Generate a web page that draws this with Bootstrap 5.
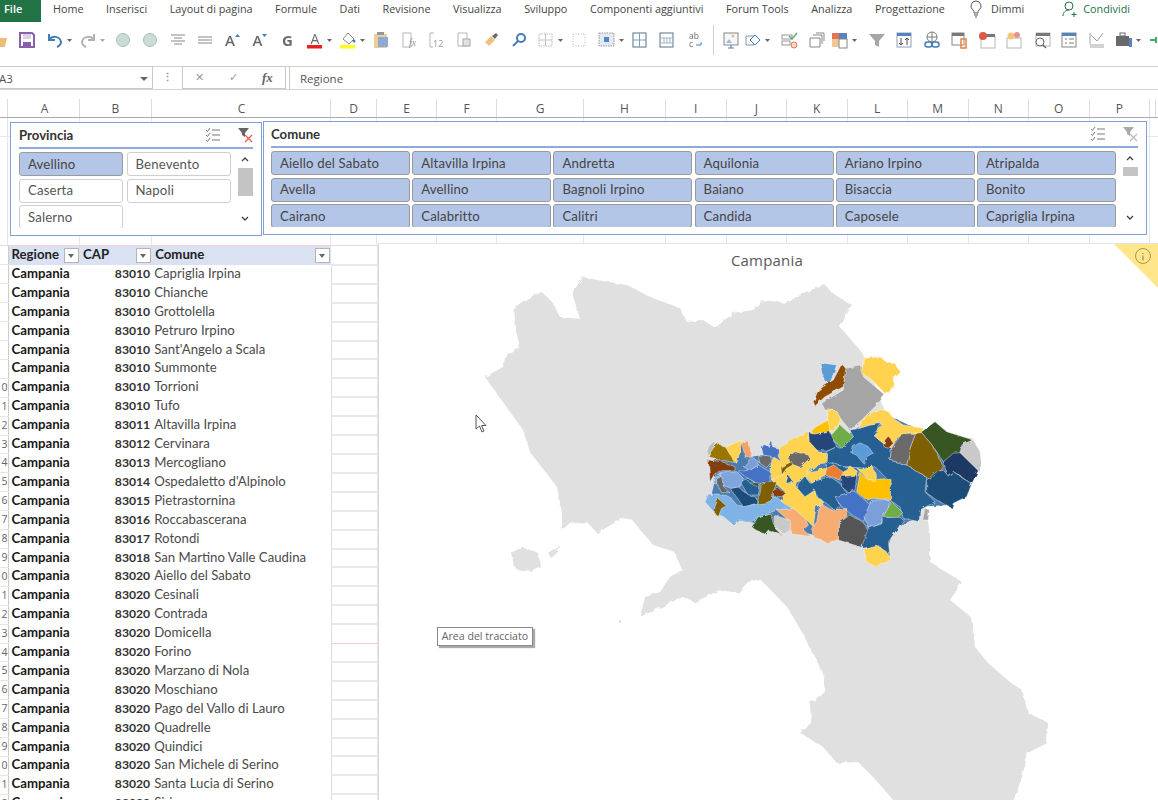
<!DOCTYPE html>
<html lang="it"><head><meta charset="utf-8"><title>Campania</title>
<link href="https://cdn.jsdelivr.net/npm/bootstrap@5.3.0/dist/css/bootstrap.min.css" rel="stylesheet">
<style>
html,body{margin:0;height:800px;overflow:hidden;background:#fff}
body{width:1158px;font-family:"Open Sans","Liberation Sans",sans-serif;font-size:11px;color:#444}
.tabs{height:22px}
.tab-file{width:41px;height:22px;background:#217346;color:#fff;font-weight:600;padding-left:4px;line-height:18px;font-size:11px;border-radius:0}
.tabs a{color:#444;text-decoration:none;line-height:18px;font-size:10.8px}
.tabs .a1{margin-left:12px}.tabs .a2{margin-left:22.600px}
.tabs .tgreen{color:#217346}
.toolbar{height:44px;padding-bottom:8px;margin-left:-19px}
.ti{width:18px;height:18px;margin-left:9.5px;flex:none;font-size:15px;line-height:18px;text-align:center;color:#555;opacity:.88}
.tc{width:5px;height:18px;margin-left:3px;flex:none}
.tc+.ti{margin-left:7px}
.g1{margin-left:9px!important}.g3{margin-left:9.5px!important}.g4{margin-left:10px!important}.g5{margin-left:5.500px!important}.g6{margin-left:10.500px!important}.g7{margin-left:8.500px!important}.g8{margin-left:4px!important}
.sep{width:1px;height:30px;background:#ccc;flex:none;margin-left:9px}
.fbar{height:24px;border-top:1px solid #c9d6c9;border-bottom:1px solid #d4d4d4}
.namebox{width:154px;height:23px;border:1px solid #c9c9c9;border-left:0;padding:3px 0 0 0;font-size:11.5px;color:#555;margin-top:-1px;margin-left:-1px}
.fdots{width:29px;color:#999;text-align:center;font-weight:700;line-height:20px}
.fbtns{width:104px;height:23px;border:1px solid #c9c9c9;margin-top:-1px;color:#999}
.fxs{font-family:"Liberation Serif",serif;font-style:italic;font-weight:700;font-size:13px;color:#666}
.finput{flex:1;height:23px;border-left:1px solid #c9c9c9;margin-left:3px;margin-top:-1px;padding:4px 0 0 10px;font-size:11.5px;color:#555}
.colhead{height:19px;margin-top:9px;border-bottom:1px solid #aaa;color:#555;font-size:12px}
.c{flex:none;border-right:1px solid #dcdcdc;text-align:center;line-height:19px;height:18px}
.c0{width:8px}.cA{width:72px;padding-left:2px}.cB{width:72px}.cC{width:179px;padding-left:1px}.cD{width:46px}.cE{width:60px}.cF{width:60px}.cG{width:87px}.cH{width:82px}.cN{width:60.500px}.cZ{width:6px}
.sheet{height:682px}
.band .c{height:100%;border-right:1px solid #e6e6e6}
.b1{height:19px;border-bottom:1px solid #e6e6e6}
.b2{height:109px;border-bottom:1px solid #f3d5d5}
table.grid{table-layout:fixed;width:378px;margin:0;font-family:Lato,"Liberation Sans",sans-serif;font-size:13.2px;border-collapse:collapse;color:#4a4a4a}
table.grid td,table.grid th{height:18.92px;padding:0;line-height:17px;border:0;white-space:nowrap;overflow:hidden;background:#fff;box-shadow:none}
table.grid .rn{width:8px;text-align:right;font-family:"Open Sans",sans-serif;font-size:10.5px;font-weight:400;color:#666;border-bottom:1px solid #e6e6e6;border-right:1px solid #ccc;direction:rtl}
table.grid .rg{font-weight:700;color:#1a1a1a;padding-left:3px}
table.grid .cp{font-weight:700;color:#333;text-align:right;padding-right:2px;font-size:12.2px}
table.grid .cm{padding-left:2px;border-right:1px solid #dcdcdc}
table.grid .gd{width:47px;border-bottom:2px solid #e8e8e8;border-right:1px solid #e4e4e4}
table.grid .pink{border-bottom:1px solid #f3cfcf}
table.grid tr.hd th{background:#d9e1f2;font-weight:700;color:#222;padding-left:3px;position:relative}
table.grid tr.hd th.gd,table.grid tr.hd th.rn{background:#fff;padding:0}
.fb{position:absolute;right:1px;top:2px;width:15px;height:15px;background:#fff;border:1px solid #b5b5b5}
.fb::after{content:"";position:absolute;left:3px;top:5px;border:3.5px solid transparent;border-top:4px solid #666}
.slicer{position:absolute;background:#fff;border:1px solid #7f9fd6;padding:4px 8px 0}
.s1{left:10px;top:122px;width:252px;height:114px}
.s2{left:263px;top:121px;width:884px;height:114px;padding-left:7px}
.sl-head{height:22px;border-bottom:2px solid #8eaadb;font-family:Lato,"Liberation Sans",sans-serif;font-weight:700;font-size:13.2px;color:#333;line-height:17px}
.sl-body{margin-top:3px;column-gap:3.5px;row-gap:2.500px}
.s1 .sl-body{grid-template-columns:repeat(2,104px);width:212px;height:76px;overflow:hidden}
.s2 .sl-body{grid-template-columns:repeat(6,139px);column-gap:2.200px;width:846px;height:76px;overflow:hidden}
.sb{--bs-btn-padding-y:0;--bs-btn-padding-x:8px;--bs-btn-font-size:13.2px;--bs-btn-border-radius:3px;--bs-btn-color:#555;--bs-btn-bg:#fff;--bs-btn-border-color:#cfcfcf;--bs-btn-line-height:21px;height:24px;text-align:left;font-family:Lato,"Open Sans",sans-serif;letter-spacing:.15px;white-space:nowrap}
.sb.on{--bs-btn-bg:#b4c6e7;--bs-btn-border-color:#9a9a9a;--bs-btn-color:#444}
.sbar{width:16px;height:74px;margin-top:3px}
.thumb{background:#c4c4c4;width:15px;margin-top:2px}
.s1 .thumb{height:28px}.s2 .thumb{height:9px}
.chart{position:absolute;left:378px;top:243px;width:780px;height:557px;background:#fff;border-left:1px solid #d9d9d9;border-top:1px solid #e4e4e4}
.chart-title{font-size:15px;color:#595959;padding:5px 3px 0 0;text-align:center;line-height:22px;letter-spacing:.2px}
.mapsvg{position:absolute;left:0;top:0}
.corner{position:absolute;right:0;top:0}
.tip{position:absolute;left:58px;top:383px;width:96px;height:19px;background:#fff;border:1px solid #8a8a8a;box-shadow:2px 2px 1px #aaa;font-size:10.6px;line-height:16px;text-align:center;color:#666}
.cursor{position:absolute;left:96px;top:170px}
</style></head><body>

<nav class="tabs d-flex align-items-start">
<div class="tab-file">File</div>
<a class="a1" href="#">Home</a><a class="a2" href="#">Inserisci</a><a class="a2" href="#">Layout di pagina</a><a class="a2" href="#">Formule</a><a class="a2" href="#">Dati</a><a class="a2" href="#">Revisione</a><a class="a2" href="#">Visualizza</a><a class="a2" href="#">Sviluppo</a><a class="a2" href="#">Componenti aggiuntivi</a><a class="a2" href="#">Forum Tools</a><a class="a2" href="#">Analizza</a><a class="a2" href="#">Progettazione</a>
<svg class="ms-4 me-2" width="14" height="18" viewBox="0 0 14 18"><path d="M7 1a5 5 0 0 0-3 9c1 1 1 2 1 3h4c0-1 0-2 1-3a5 5 0 0 0-3-9zM5 15h4M6 17h2" fill="none" stroke="#555"/></svg>
<a href="#">Dimmi</a>
<svg class="ms-auto" width="17" height="18" viewBox="0 0 17 18"><circle cx="7" cy="6" r="4" fill="none" stroke="#217346"/><path d="M1 16c0-4 3-6 6-6M12 12v5M9.500 14.500h5" fill="none" stroke="#217346"/></svg>
<a href="#" class="tgreen ms-1 me-4 pe-1">Condividi</a>
</nav>

<div class="toolbar d-flex align-items-center">
<svg class="ti" viewBox="0 0 18 18"><path d="M1 5h6l2 2h7l-2 9H1z" fill="#eab564"/></svg>
<svg class="ti" viewBox="0 0 18 18"><path d="M2 2h12l2 2v12H2z" fill="none" stroke="#7a4ba0" stroke-width="2"/><path d="M5 3h8v5H5z" fill="#d9cbe6"/><path d="M5 11h8v5H5z" fill="#7a4ba0"/></svg>
<svg class="ti" viewBox="0 0 18 18"><path d="M3 3v6h6M3 9c3-5 11-4 12 2 0 3-2 4-4 5" fill="none" stroke="#2a6ab0" stroke-width="2"/></svg><svg class="tc" viewBox="0 0 5 18"><path d="M0 8h5L2.500 11z" fill="#666"/></svg>
<svg class="ti" viewBox="0 0 18 18"><path d="M15 3v6H9M15 9C12 4 4 5 3 11c0 3 2 4 4 5" fill="none" stroke="#a8a8a8" stroke-width="2"/></svg><svg class="tc" viewBox="0 0 5 18"><path d="M0 8h5L2.500 11z" fill="#aaa"/></svg>
<svg class="ti g1" viewBox="0 0 18 18"><circle cx="9" cy="9" r="6.500" fill="#c3d8d0" stroke="#97b7ab"/></svg>
<svg class="ti" viewBox="0 0 18 18"><circle cx="9" cy="9" r="6.500" fill="#c3d8d0" stroke="#97b7ab"/></svg>
<svg class="ti" viewBox="0 0 18 18"><path d="M2 4h14M5 7h8M2 10h14M5 13h8" stroke="#777"/></svg>
<svg class="ti" viewBox="0 0 18 18"><path d="M2 6h14M2 9h14M2 12h14" stroke="#777"/></svg>
<span class="ti d-flex justify-content-center fw-semibold">A<svg width="5" height="18" viewBox="0 0 5 18"><path d="M0 6l2.500-3L5 6z" fill="#2a6ab0"/></svg></span>
<span class="ti d-flex justify-content-center fw-semibold">A<svg width="5" height="18" viewBox="0 0 5 18"><path d="M0 3l2.500 3L5 3z" fill="#2a6ab0"/></svg></span>
<span class="ti fw-bold">G</span>
<svg class="ti" viewBox="0 0 18 18"><text x="9" y="13" text-anchor="middle" font-size="14" fill="#555" font-family="Open Sans">A</text><rect x="1" y="14" width="15" height="3.500" fill="#e60000"/></svg><svg class="tc" viewBox="0 0 5 18"><path d="M0 8h5L2.500 11z" fill="#666"/></svg>
<svg class="ti" viewBox="0 0 18 18"><path d="M9 2l6 6-5 5-6-5z" fill="#fff" stroke="#777"/><circle cx="15" cy="10" r="1.500" fill="#2a6ab0"/><rect x="1" y="14" width="15" height="3.500" fill="#ffff00"/></svg><svg class="tc" viewBox="0 0 5 18"><path d="M0 8h5L2.500 11z" fill="#666"/></svg>
<svg class="ti" viewBox="0 0 18 18"><rect x="2" y="3" width="13" height="14" fill="#edc58d"/><rect x="5" y="1" width="7" height="3" fill="#888"/><rect x="6" y="6" width="10" height="10" fill="#7d9fce"/></svg>
<svg class="ti" viewBox="0 0 18 18"><path d="M3 2h8v14H3z" fill="none" stroke="#aaa"/><text x="9" y="15" font-size="10" font-style="italic" fill="#888" font-family="Liberation Serif">fx</text></svg>
<svg class="ti" viewBox="0 0 18 18"><path d="M3 2h4M3 2v14h3" fill="none" stroke="#aaa"/><text x="6" y="16" font-size="9" fill="#888" font-family="Open Sans">12</text></svg>
<svg class="ti" viewBox="0 0 18 18"><path d="M3 2h9v13H3z" fill="none" stroke="#aaa"/><rect x="8" y="8" width="7" height="7" fill="#ddd" stroke="#999"/></svg>
<svg class="ti" viewBox="0 0 18 18"><path d="M3 11l6-6 4 4-6 6z" fill="#e9bb6e"/><path d="M10 5l4-3 2 2-3 4z" fill="#555"/></svg>
<svg class="ti" viewBox="0 0 18 18"><circle cx="11" cy="7" r="4" fill="none" stroke="#2a6ab0" stroke-width="2"/><path d="M8 10l-5 5" stroke="#2a6ab0" stroke-width="2"/></svg>
<svg class="ti" viewBox="0 0 18 18"><rect x="2" y="3" width="13" height="12" fill="none" stroke="#aaa" stroke-dasharray="1.500 1"/><path d="M8.500 3v12M2 9h13" stroke="#bbb"/></svg><svg class="tc" viewBox="0 0 5 18"><path d="M0 8h5L2.500 11z" fill="#666"/></svg>
<svg class="ti" viewBox="0 0 18 18"><rect x="3" y="3" width="12" height="12" fill="none" stroke="#aaa" stroke-dasharray="1 1.500"/></svg>
<svg class="ti g3" viewBox="0 0 18 18"><rect x="1" y="2" width="15" height="13" fill="#dfe6ee" stroke="#888" stroke-dasharray="1.500 1"/><rect x="6" y="6" width="5" height="5" fill="#3d72b8"/></svg><svg class="tc" viewBox="0 0 5 18"><path d="M0 8h5L2.500 11z" fill="#666"/></svg>
<svg class="ti" viewBox="0 0 18 18"><rect x="2" y="2" width="13" height="14" fill="none" stroke="#3f5f7f"/><path d="M2 9h13M8.500 2v14" stroke="#6f8fa8"/></svg>
<svg class="ti" viewBox="0 0 18 18"><rect x="2" y="2" width="13" height="14" fill="none" stroke="#3f5f7f"/><path d="M2 7h13M6 7v5M9 7v5M12 7v5M2 12h13" stroke="#8fa8bb"/></svg>
<svg class="ti" viewBox="0 0 18 18"><text x="3" y="8" font-size="8.500" fill="#555" font-family="Open Sans">ab</text><text x="3" y="16" font-size="8.500" fill="#555" font-family="Open Sans">c</text><path d="M10 14h5v-3" fill="none" stroke="#2a6ab0"/></svg>
<span class="sep"></span>
<svg class="ti g7" viewBox="0 0 18 18"><rect x="2" y="2" width="14" height="12" fill="#f4f7fb" stroke="#777"/><path d="M4 12l3-4 3 4z" fill="#8db4e2"/><circle cx="11" cy="5" r="1.500" fill="#e8b464"/><path d="M9 14v3M6 17h6" stroke="#2a6ab0"/></svg>
<svg class="ti g8" viewBox="0 0 18 18"><path d="M2 5h8v9H2z" fill="none" stroke="#6a86a8"/><path d="M11 4l5 5-5 5-5-5z" fill="#fff" stroke="#2a6ab0"/></svg><svg class="tc" viewBox="0 0 5 18"><path d="M0 8h5L2.500 11z" fill="#666"/></svg>
<svg class="ti g4" viewBox="0 0 18 18"><rect x="2" y="4" width="10" height="4" fill="none" stroke="#888"/><rect x="2" y="10" width="8" height="4" fill="none" stroke="#888"/><path d="M9 5l3 3 5-6" fill="none" stroke="#4a9a5a" stroke-width="1.500"/><circle cx="14" cy="14" r="3" fill="#f5d5c5" stroke="#e0603a"/></svg>
<svg class="ti" viewBox="0 0 18 18"><path d="M2 7h10v9H2z" fill="#fff" stroke="#777"/><path d="M5 4h9v9M8 2h8v8" fill="none" stroke="#777"/></svg>
<svg class="ti g5" viewBox="0 0 18 18"><rect x="1" y="2" width="7" height="6" fill="#e0603a"/><rect x="8" y="2" width="8" height="6" fill="#3d72b8"/><rect x="1" y="8" width="7" height="8" fill="#f0c08a"/><rect x="8" y="8" width="8" height="9" fill="#fff" stroke="#777"/></svg><svg class="tc" viewBox="0 0 5 18"><path d="M0 8h5L2.500 11z" fill="#666"/></svg>
<svg class="ti g6" viewBox="0 0 18 18"><path d="M1 3h16l-6 7v6l-4-2v-4z" fill="#9a9a9a"/></svg>
<svg class="ti" viewBox="0 0 18 18"><rect x="2" y="2" width="14" height="14" fill="none" stroke="#7a93b0"/><rect x="2" y="2" width="14" height="3" fill="#3d72b8"/><path d="M6 7v7M4 12l2 2 2-2M12 14V7M10 9l2-2 2 2" fill="none" stroke="#333"/></svg>
<svg class="ti" viewBox="0 0 18 18"><circle cx="9" cy="6" r="5" fill="none" stroke="#666"/><path d="M4 6h10M9 1v10" stroke="#666"/><rect x="2" y="11" width="7" height="5" rx="2.500" fill="none" stroke="#2a6ab0" stroke-width="1.500"/><rect x="9" y="11" width="7" height="5" rx="2.500" fill="none" stroke="#2a6ab0" stroke-width="1.500"/></svg>
<svg class="ti" viewBox="0 0 18 18"><rect x="2" y="2" width="12" height="12" fill="#fff" stroke="#777"/><rect x="2" y="2" width="12" height="3" fill="#666"/><path d="M11 8h5v9h-5z" fill="none" stroke="#e8702a" stroke-width="1.500"/></svg>
<svg class="ti" viewBox="0 0 18 18"><rect x="3" y="5" width="14" height="12" fill="#fff" stroke="#aaa"/><rect x="8" y="3" width="9" height="3" fill="#666"/><circle cx="5" cy="5" r="4" fill="#d8442a"/></svg>
<svg class="ti" viewBox="0 0 18 18"><rect x="2" y="7" width="14" height="10" fill="#fff" stroke="#aaa"/><circle cx="6" cy="5" r="3.500" fill="#f0c060"/><circle cx="12" cy="4" r="3" fill="#e88080"/></svg>
<svg class="ti" viewBox="0 0 18 18"><rect x="3" y="2" width="14" height="13" fill="#fff" stroke="#aaa"/><rect x="3" y="2" width="14" height="3" fill="#666"/><circle cx="7" cy="11" r="4" fill="#fff" stroke="#555"/><path d="M10 14l3 3" stroke="#555" stroke-width="1.500"/></svg>
<svg class="ti" viewBox="0 0 18 18"><rect x="2" y="2" width="14" height="14" fill="#fff" stroke="#777"/><rect x="2" y="2" width="14" height="3" fill="#3d72b8"/><path d="M5 8h2M9 8h5M5 12h2M9 12h5" stroke="#666"/></svg>
<svg class="ti" viewBox="0 0 18 18"><rect x="2" y="13" width="14" height="4" fill="#ccc"/><path d="M2 2v11M3 4l6 6 6-8" fill="none" stroke="#999"/></svg>
<svg class="ti" viewBox="0 0 18 18"><rect x="1" y="5" width="13" height="10" fill="#555"/><rect x="5" y="2" width="5" height="3" fill="none" stroke="#555"/><rect x="14" y="7" width="3" height="9" fill="#3d72b8"/></svg><svg class="tc" viewBox="0 0 5 18"><path d="M0 8h5L2.500 11z" fill="#666"/></svg>
<svg class="ti" viewBox="0 0 18 18"><path d="M2 9h6M8 6v6" stroke="#2f9e5a" stroke-width="2"/></svg>
</div>

<div class="fbar d-flex align-items-start">
<div class="namebox d-flex justify-content-between"><span>A3</span><svg class="me-1 mt-1" width="8" height="10" viewBox="0 0 8 10"><path d="M0 3h8L4 7z" fill="#666"/></svg></div>
<div class="fdots">⋮</div>
<div class="fbtns d-flex align-items-center justify-content-around"><span>✕</span><span>✓</span><span class="fxs">fx</span></div>
<div class="finput">Regione</div>
</div>

<div class="colhead d-flex">
<div class="c c0"></div><div class="c cA">A</div><div class="c cB">B</div><div class="c cC">C</div><div class="c cD">D</div><div class="c cE">E</div><div class="c cF">F</div><div class="c cG">G</div><div class="c cH">H</div><div class="c cN">I</div><div class="c cN">J</div><div class="c cN">K</div><div class="c cN">L</div><div class="c cN">M</div><div class="c cN">N</div><div class="c cN">O</div><div class="c cN">P</div><div class="c cZ"></div>
</div>

<div class="sheet position-relative overflow-hidden">
<div class="band">
<div class="b1 d-flex"><div class="c c0"></div><div class="c cA"></div><div class="c cB"></div><div class="c cC"></div><div class="c cD"></div><div class="c cE"></div><div class="c cF"></div><div class="c cG"></div><div class="c cH"></div><div class="c cN"></div><div class="c cN"></div><div class="c cN"></div><div class="c cN"></div><div class="c cN"></div><div class="c cN"></div><div class="c cN"></div><div class="c cN"></div></div>
<div class="b2 d-flex"><div class="c c0"></div><div class="c cA"></div><div class="c cB"></div><div class="c cC"></div><div class="c cD"></div><div class="c cE"></div><div class="c cF"></div><div class="c cG"></div><div class="c cH"></div><div class="c cN"></div><div class="c cN"></div><div class="c cN"></div><div class="c cN"></div><div class="c cN"></div><div class="c cN"></div><div class="c cN"></div><div class="c cN"></div></div>
</div>
<table class="table grid">
<colgroup><col class="c0"><col class="cA"><col class="cB"><col class="cC"><col class="cD"></colgroup>
<tbody>
<tr class="hd"><th class="rn"></th><th>Regione<span class="fb"></span></th><th>CAP<span class="fb"></span></th><th>Comune<span class="fb"></span></th><th class="gd"></th></tr>
<tr><td class="rn"></td><td class="rg">Campania</td><td class="cp">83010</td><td class="cm">Capriglia Irpina</td><td class="gd"></td></tr>
<tr><td class="rn"></td><td class="rg">Campania</td><td class="cp">83010</td><td class="cm">Chianche</td><td class="gd"></td></tr>
<tr><td class="rn"></td><td class="rg">Campania</td><td class="cp">83010</td><td class="cm">Grottolella</td><td class="gd"></td></tr>
<tr><td class="rn"></td><td class="rg">Campania</td><td class="cp">83010</td><td class="cm">Petruro Irpino</td><td class="gd"></td></tr>
<tr><td class="rn"></td><td class="rg">Campania</td><td class="cp">83010</td><td class="cm">Sant'Angelo a Scala</td><td class="gd"></td></tr>
<tr><td class="rn"></td><td class="rg">Campania</td><td class="cp">83010</td><td class="cm">Summonte</td><td class="gd"></td></tr>
<tr><td class="rn">0</td><td class="rg">Campania</td><td class="cp">83010</td><td class="cm">Torrioni</td><td class="gd"></td></tr>
<tr><td class="rn">1</td><td class="rg">Campania</td><td class="cp">83010</td><td class="cm">Tufo</td><td class="gd"></td></tr>
<tr><td class="rn">2</td><td class="rg">Campania</td><td class="cp">83011</td><td class="cm">Altavilla Irpina</td><td class="gd"></td></tr>
<tr><td class="rn">3</td><td class="rg">Campania</td><td class="cp">83012</td><td class="cm">Cervinara</td><td class="gd"></td></tr>
<tr><td class="rn">4</td><td class="rg">Campania</td><td class="cp">83013</td><td class="cm">Mercogliano</td><td class="gd"></td></tr>
<tr><td class="rn">5</td><td class="rg">Campania</td><td class="cp">83014</td><td class="cm">Ospedaletto d'Alpinolo</td><td class="gd"></td></tr>
<tr><td class="rn">6</td><td class="rg">Campania</td><td class="cp">83015</td><td class="cm">Pietrastornina</td><td class="gd"></td></tr>
<tr><td class="rn">7</td><td class="rg">Campania</td><td class="cp">83016</td><td class="cm">Roccabascerana</td><td class="gd"></td></tr>
<tr><td class="rn">8</td><td class="rg">Campania</td><td class="cp">83017</td><td class="cm">Rotondi</td><td class="gd"></td></tr>
<tr><td class="rn">9</td><td class="rg">Campania</td><td class="cp">83018</td><td class="cm">San Martino Valle Caudina</td><td class="gd"></td></tr>
<tr><td class="rn">0</td><td class="rg">Campania</td><td class="cp">83020</td><td class="cm">Aiello del Sabato</td><td class="gd"></td></tr>
<tr><td class="rn">1</td><td class="rg">Campania</td><td class="cp">83020</td><td class="cm">Cesinali</td><td class="gd"></td></tr>
<tr><td class="rn">2</td><td class="rg">Campania</td><td class="cp">83020</td><td class="cm">Contrada</td><td class="gd"></td></tr>
<tr><td class="rn">3</td><td class="rg">Campania</td><td class="cp">83020</td><td class="cm">Domicella</td><td class="gd pink"></td></tr>
<tr><td class="rn">4</td><td class="rg">Campania</td><td class="cp">83020</td><td class="cm">Forino</td><td class="gd"></td></tr>
<tr><td class="rn">5</td><td class="rg">Campania</td><td class="cp">83020</td><td class="cm">Marzano di Nola</td><td class="gd"></td></tr>
<tr><td class="rn">6</td><td class="rg">Campania</td><td class="cp">83020</td><td class="cm">Moschiano</td><td class="gd"></td></tr>
<tr><td class="rn">7</td><td class="rg">Campania</td><td class="cp">83020</td><td class="cm">Pago del Vallo di Lauro</td><td class="gd"></td></tr>
<tr><td class="rn">8</td><td class="rg">Campania</td><td class="cp">83020</td><td class="cm">Quadrelle</td><td class="gd"></td></tr>
<tr><td class="rn">9</td><td class="rg">Campania</td><td class="cp">83020</td><td class="cm">Quindici</td><td class="gd"></td></tr>
<tr><td class="rn">0</td><td class="rg">Campania</td><td class="cp">83020</td><td class="cm">San Michele di Serino</td><td class="gd"></td></tr>
<tr><td class="rn">1</td><td class="rg">Campania</td><td class="cp">83020</td><td class="cm">Santa Lucia di Serino</td><td class="gd"></td></tr>
<tr><td class="rn">2</td><td class="rg">Campania</td><td class="cp">83020</td><td class="cm">Sirignano</td><td class="gd"></td></tr>
</tbody></table>
</div>

<section class="slicer s1">
<div class="sl-head d-flex justify-content-between"><span>Provincia</span><span class="d-flex gap-3 me-0">
<svg width="16" height="16" viewBox="0 0 16 16"><path d="M1 3l1.500 1.500L5 1M1 8l1.500 1.500L5 6M1 13l1.500 1.500L5 11" fill="none" stroke="#777"/><path d="M7 3h8M7 8h8M7 13h8" stroke="#777"/></svg>
<svg width="16" height="16" viewBox="0 0 16 16"><path d="M1 1h11L8 6v4L5 8V6z" fill="#666"/><path d="M8 8l7 7M15 8l-7 7" stroke="#e4604e" stroke-width="1.300"/></svg></span></div>
<div class="d-flex justify-content-between">
<div class="d-grid sl-body">
<button class="btn sb on">Avellino</button><button class="btn sb">Benevento</button>
<button class="btn sb">Caserta</button><button class="btn sb">Napoli</button>
<button class="btn sb">Salerno</button>
</div>
<div class="sbar d-flex flex-column align-items-center justify-content-between"><svg width="10" height="14" viewBox="0 0 10 14"><path d="M2 9l3-3 3 3" fill="none" stroke="#444" stroke-width="1.400"/></svg><div class="thumb"></div><div class="flex-grow-1"></div><svg width="10" height="14" viewBox="0 0 10 14"><path d="M2 5l3 3 3-3" fill="none" stroke="#444" stroke-width="1.400"/></svg></div>
</div>
</section>

<section class="slicer s2">
<div class="sl-head d-flex justify-content-between"><span>Comune</span><span class="d-flex gap-3">
<svg width="16" height="16" viewBox="0 0 16 16"><path d="M1 3l1.500 1.500L5 1M1 8l1.500 1.500L5 6M1 13l1.500 1.500L5 11" fill="none" stroke="#777"/><path d="M7 3h8M7 8h8M7 13h8" stroke="#777"/></svg>
<svg width="16" height="16" viewBox="0 0 16 16"><path d="M1 1h11L8 6v4L5 8V6z" fill="#aaa"/><path d="M8 8l7 7M15 8l-7 7" stroke="#bbb" stroke-width="1.300"/></svg></span></div>
<div class="d-flex justify-content-between">
<div class="d-grid sl-body">
<button class="btn sb on">Aiello del Sabato</button><button class="btn sb on">Altavilla Irpina</button><button class="btn sb on">Andretta</button><button class="btn sb on">Aquilonia</button><button class="btn sb on">Ariano Irpino</button><button class="btn sb on">Atripalda</button>
<button class="btn sb on">Avella</button><button class="btn sb on">Avellino</button><button class="btn sb on">Bagnoli Irpino</button><button class="btn sb on">Baiano</button><button class="btn sb on">Bisaccia</button><button class="btn sb on">Bonito</button>
<button class="btn sb on">Cairano</button><button class="btn sb on">Calabritto</button><button class="btn sb on">Calitri</button><button class="btn sb on">Candida</button><button class="btn sb on">Caposele</button><button class="btn sb on">Capriglia Irpina</button>
</div>
<div class="sbar d-flex flex-column align-items-center justify-content-between"><svg width="10" height="14" viewBox="0 0 10 14"><path d="M2 9l3-3 3 3" fill="none" stroke="#444" stroke-width="1.400"/></svg><div class="thumb"></div><div class="flex-grow-1"></div><svg width="10" height="14" viewBox="0 0 10 14"><path d="M2 5l3 3 3-3" fill="none" stroke="#444" stroke-width="1.400"/></svg></div>
</div>
</section>

<figure class="chart m-0">
<svg class="mapsvg" width="779" height="556" viewBox="379 244 779 556">
<defs><filter id="rough" x="-3%" y="-3%" width="106%" height="106%"><feTurbulence type="fractalNoise" baseFrequency=".16" numOctaves="2" seed="4" result="n"/><feDisplacementMap in="SourceGraphic" in2="n" scale="4"/></filter></defs>
<g filter="url(#rough)">
<g fill="#e0e0e0">
<path d="M485 377 503 367 505 358 520 347 515 327 513 308 528 298 542 292 552 302 560 317 580 319 572 293 583 277 597 280 627 285 650 297 680 308 687 322 703 320 715 328 733 313 753 310 762 300 787 303 803 293 825 285 832 293 852 305 840 327 860 350 865 358 880 400 925 505 930 533 930 562 962 582 950 600 972 618 975 647 988 663 1010 682 1022 690 1028 713 1048 723 1047 743 1028 753 1022 777 1010 810 973 810 902 810 873 777 858 762 837 763 823 747 800 733 811 723 810 703 825 692 823 673 802 632 787 607 760 579 748 582 738 593 720 590 695 602 683 597 640 617 645 597 660 592 670 577 682 570 675 552 653 545 632 520 623 518 597 533 587 522 570 523 562 530 562 513 557 487 530 452 523 430Z"/>
<path d="M511 553 522 547 538 553 541 566 530 571 515 569Z"/><path d="M548 553 559 545 558 552 551 558Z"/><path d="M619 620h3v3h-3Z"/>
</g>
<g transform="translate(680 340) scale(.33333)" stroke="#fff" stroke-width="1.200" stroke-linejoin="round">
<polygon fill="#4b7cb0" stroke="none" points="105,420 95,365 140,330 185,310 215,350 250,345 250,330 295,335 385,285 510,280 600,215 730,275 870,305 895,375 870,425 810,495 715,500 712,535 645,560 620,630 550,610 445,595 340,570 225,548 165,540 90,485"/>
<polygon fill="#255e91" points="510,270 540,265 570,255 605,250 580,285 610,310 635,325 630,360 680,375 740,412 735,455 765,485 720,510 718,545 670,535 660,500 630,480 630,425 585,380 550,385 490,380 430,365 440,335 470,320 480,325 520,290"/>
<polygon fill="#5b9bd5" points="420,68 470,75 450,130 430,120"/>
<polygon fill="#a5a5a5" points="495,85 545,78 550,110 615,165 590,195 545,240 510,270 485,240 465,212 435,210 425,190 490,150"/>
<polygon fill="#8f4b00" points="485,72 497,85 490,140 435,170 405,198 400,185 415,150 460,120"/>
<polygon fill="#ffd34f" points="545,100 550,55 600,50 625,70 645,70 660,95 640,110 640,145 615,160 570,115"/>
<polygon fill="#ffd34f" points="535,265 560,225 600,205 625,215 645,240 670,255 730,265 725,278 680,280 650,295 635,325 610,310 580,285 600,265 605,250 570,255"/>
<polygon fill="#385723" points="725,275 765,245 800,275 880,300 845,315 840,338 790,365 760,320 725,278"/>
<polygon fill="#c9c9c9" points="880,300 900,335 905,375 895,392 840,340 850,312"/>
<polygon fill="#7f6000" points="707,280 725,278 760,320 790,380 765,418 740,412 680,375 690,325"/>
<polygon fill="#6a6a6a" points="665,282 707,280 690,325 680,375 630,360 635,325"/>
<polygon fill="#1f3864" points="820,340 840,338 895,392 875,432 845,410 820,395 800,408 795,380 790,365"/>
<polygon fill="#1f4e79" points="740,420 770,395 790,390 805,408 820,395 875,432 860,470 820,490 815,505 770,480 740,460"/>
<polygon fill="#5b9bd5" points="540,308 565,320 578,340 560,350 550,370 530,345 515,340 520,320"/>
<polygon fill="#843c0c" points="625,288 640,310 625,325 610,318 615,300"/>
<polygon fill="#a5a5a5" points="735,505 748,510 745,540 728,540"/>
<polygon fill="#ffd34f" points="440,210 470,212 485,245 450,275 440,255"/>
<polygon fill="#ffc000" points="445,240 450,275 410,285 390,280 405,262"/>
<polygon fill="#70ad47" points="480,255 520,290 485,325 450,290"/>
<polygon fill="#264478" points="385,275 410,285 450,275 470,320 440,333 400,330 385,300"/>
<polygon fill="#ffd34f" points="295,325 385,272 388,305 420,340 440,340 438,372 410,375 385,395 382,420 350,425 345,440 320,430 310,405 275,420 270,385 280,350 295,350"/>
<polygon fill="#6a6a6a" points="325,350 345,335 385,345 390,355 360,382 330,370"/>
<polygon fill="#7f6000" points="305,405 303,380 335,365 338,375 320,385"/>
<polygon fill="#ffd34f" points="275,420 310,405 345,440 352,440 375,470 405,450 410,470 435,490 408,500 400,560 385,545 340,505 300,490 315,455"/>
<polygon fill="#255e91" points="355,430 375,408 390,430 430,415 450,410 480,430 500,460 470,470 478,495 465,512 440,490 410,470 405,450 375,470 352,445"/>
<polygon fill="#ffd34f" points="385,395 410,390 440,385 435,405 395,430 385,420"/>
<polygon fill="#255e91" points="440,365 490,380 550,385 530,400 485,400 440,385"/>
<polygon fill="#ed7d31" points="440,385 460,375 490,395 478,420 450,408 436,405"/>
<polygon fill="#ffd34f" points="485,395 510,378 535,395 530,410 490,410"/>
<polygon fill="#264478" points="485,410 530,405 525,450 505,457 485,440"/>
<polygon fill="#ffc000" points="540,400 565,420 630,415 632,480 580,475 560,480 530,455"/>
<polygon fill="#ffd34f" points="530,385 550,390 575,375 590,410 585,425 565,420"/>
<polygon fill="#4472c4" points="500,460 525,455 565,490 575,485 550,545 510,520 480,495 465,470"/>
<polygon fill="#7c9fd9" points="575,480 630,478 625,505 605,535 605,550 565,565 552,530"/>
<polygon fill="#70ad47" points="635,485 668,518 650,535 610,530"/>
<polygon fill="#255e91" points="610,533 660,532 670,540 650,570 625,605 630,650 600,620 550,628 543,595 565,565 605,552"/>
<polygon fill="#ffd34f" points="552,630 590,618 620,635 635,660 585,680 560,665"/>
<polygon fill="#545454" points="475,550 510,525 550,548 562,572 545,622 475,600"/>
<polygon fill="#f7ac72" points="420,490 455,510 500,505 500,530 475,550 475,600 440,608 400,590 395,565 410,545"/>
<polygon fill="#f7ac72" points="290,510 340,505 375,535 385,555 370,570 395,590 335,582 330,545"/>
<polygon fill="#c9c9c9" points="280,525 330,540 335,570 310,582 285,560"/>
<polygon fill="#385723" points="215,560 235,530 270,518 285,565 305,585 265,570 255,582 235,575"/>
<polygon fill="#7fb3e6" points="75,485 85,462 115,462 150,470 170,495 200,500 230,490 290,470 310,490 340,505 290,510 270,518 235,530 215,545 175,540 160,555 130,530 105,520"/>
<polygon fill="#7f6000" points="115,475 130,490 140,498 125,505 115,530 103,520 105,500"/>
<polygon fill="#1f4e79" points="150,445 175,440 190,455 230,475 230,490 190,500 165,465"/>
<polygon fill="#7f6000" points="245,430 290,425 280,460 275,485 230,492 240,460"/>
<polygon fill="#843c0c" points="280,450 295,445 318,460 305,470 280,468"/>
<polygon fill="#255e91" points="180,425 205,415 240,437 235,465 205,465"/>
<polygon fill="#4472c4" points="175,395 210,390 235,375 270,395 270,425 240,435 205,415"/>
<polygon fill="#7c9fd9" points="190,380 215,350 240,368 232,378 208,392"/>
<polygon fill="#6a6a6a" points="235,350 270,345 275,365 260,383 240,370"/>
<polygon fill="#4472c4" points="245,325 250,315 265,320 272,300 278,320 295,325 295,350 305,365 280,350 250,345"/>
<polygon fill="#f4a26b" points="185,310 200,298 210,320 215,350 197,355"/>
<polygon fill="#ffd34f" points="140,320 185,300 180,335 170,370 150,350"/>
<polygon fill="#9a7400" points="90,330 115,310 140,325 165,368 125,360 85,350"/>
<polygon fill="#bdbdbd" points="100,305 110,310 90,340 78,345 85,320"/>
<polygon fill="#843c0c" points="85,360 125,365 165,380 165,392 130,395 105,400 90,425"/>
<polygon fill="#7fa6dc" points="120,400 170,395 190,415 180,440 155,445 125,435"/>
<polygon fill="#7fb3e6" points="100,410 120,400 125,435 100,430"/>
<polygon fill="#666" points="110,410 125,410 130,440 150,458 125,458 110,430"/>
<polygon fill="#255e91" points="325,405 340,425 330,432 318,428"/>
<polygon fill="#385723" points="205,425 240,430 230,440"/>
</g>
</g>
</svg>
<figcaption class="chart-title position-relative">Campania</figcaption>
<svg class="corner" width="44" height="44" viewBox="0 0 44 44"><path d="M0 0h44v44z" fill="#ffe68a"/><circle cx="29" cy="12" r="7.500" fill="none" stroke="#a89a50"/><path d="M29 9v1M29 11.500v5" stroke="#a89a50" stroke-width="1.300"/></svg>
<div class="tip">Area del tracciato</div>
<svg class="cursor" width="13" height="19" viewBox="0 0 13 19"><path d="M1 1v14l3.500-3 2.500 6 2-1-2.500-5.500H11z" fill="#fff" stroke="#555"/></svg>
</figure>
</body></html>
